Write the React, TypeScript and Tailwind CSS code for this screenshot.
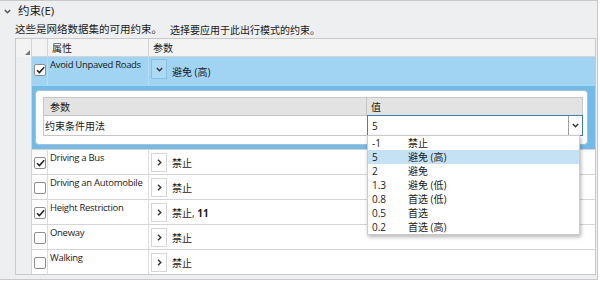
import React from "react";

function Check() {
  return (
    <svg width="9" height="8" viewBox="0 0 9 8">
      <path d="M1 4.3 L3.4 6.6 L8.2 1.2" fill="none" stroke="#1f1f1f" strokeWidth="1.5" />
    </svg>
  );
}

function CheckBox({ checked }: { checked: boolean }) {
  return (
    <div className="w-[12px] h-[12px] rounded-[2px] border border-[#8e8e8e] bg-white flex items-center justify-center">
      {checked && <Check />}
    </div>
  );
}

function ChevRight() {
  return (
    <svg width="5" height="7" viewBox="0 0 5 7">
      <path d="M1 0.8 L3.8 3.5 L1 6.2" fill="none" stroke="#333" strokeWidth="1.4" />
    </svg>
  );
}

function ChevDown({ color = "#333" }: { color?: string }) {
  return (
    <svg width="7" height="5" viewBox="0 0 7 5">
      <path d="M0.8 1 L3.5 3.8 L6.2 1" fill="none" stroke={color} strokeWidth="1.4" />
    </svg>
  );
}

type Row = { checked: boolean; name: string; value: React.ReactNode };

const rows: Row[] = [
  { checked: true, name: "Driving a Bus", value: "禁止" },
  { checked: false, name: "Driving an Automobile", value: "禁止" },
  {
    checked: true,
    name: "Height Restriction",
    value: (
      <>
        禁止, <span className="font-bold">11</span>
      </>
    ),
  },
  { checked: false, name: "Oneway", value: "禁止" },
  { checked: false, name: "Walking", value: "禁止" },
];

const options = [
  ["-1", "禁止"],
  ["5", "避免 (高)"],
  ["2", "避免"],
  ["1.3", "避免 (低)"],
  ["0.8", "首选 (低)"],
  ["0.5", "首选"],
  ["0.2", "首选 (高)"],
];

export default function App() {
  return (
    <div className="relative w-[598px] h-[280px] bg-[#eeeff1] border-t border-r border-b border-[#c9c9c9] font-['Open_Sans','Noto_Sans_CJK_SC',sans-serif] text-[#1a1a1a] overflow-hidden">
      {/* title */}
      <div className="h-[20px] flex items-center pl-[4px]">
        <ChevDown color="#555" />
        <span className="ml-[7px] text-[11.5px] leading-none">约束(E)</span>
      </div>
      {/* description */}
      <div className="h-[17px] flex items-center pl-[15px] leading-none whitespace-nowrap">
        <span className="text-[10.5px]">这些是网络数据集的可用约束。</span>
        <span className="ml-[8px] text-[10px]">选择要应用于此出行模式的约束。</span>
      </div>

      {/* table */}
      <div className="ml-[15px] w-[581px] h-[237px] border border-[#c9c9c9] flex">
        {/* row header column */}
        <div className="w-[16px] border-r border-[#d4d4d4] bg-[#eeeff1] flex flex-col">
          <div className="h-[18px] bg-[#f3f3f3] relative">
            <svg className="absolute right-[1px] bottom-[2px]" width="5" height="5" viewBox="0 0 5 5">
              <path d="M5 0 L5 5 L0 5 Z" fill="#7a7a7a" />
            </svg>
          </div>
        </div>
        {/* data area */}
        <div className="flex-1 flex flex-col">
          {/* header */}
          <div className="h-[18px] flex bg-[#f3f3f3] border-b border-[#d4d4d4] text-[10px] leading-none">
            <div className="w-[16px] border-r border-[#d4d4d4]" />
            <div className="w-[101px] border-r border-[#d4d4d4] flex items-center pl-[4px]">属性</div>
            <div className="flex-1 flex items-center pl-[4px]">参数</div>
          </div>

          {/* selected row */}
          <div className="h-[29px] flex bg-[#a0d4f2] text-[10px]">
            <div className="w-[16px] border-r border-[#b5ddf5] pl-[2px] pt-[7px]">
              <CheckBox checked />
            </div>
            <div className="w-[101px] border-r border-[#b5ddf5] pl-[2px] pt-[1px] text-[9.5px] leading-[13px] whitespace-nowrap tracking-[-0.3px]">
              Avoid Unpaved Roads
            </div>
            <div className="flex-1 flex items-start pl-[2px] pt-[2px]">
              <div className="w-[16px] h-[20px] border border-[#8cc0e0] bg-[#acd9f4] flex items-center justify-center">
                <ChevDown />
              </div>
              <span className="ml-[5px] mt-[8px] leading-none">避免 (高)</span>
            </div>
          </div>

          {/* expanded detail */}
          <div className="h-[63px] bg-[#74bae7] pl-[3px] pr-[6px] pt-[4px]">
            <div className="w-[553px] h-[55px] rounded-[4px] border border-[#a8c2d4] bg-white pl-[7px] pt-[6px]">
              <div className="w-[540px] border border-[#c6c6c6] text-[10px] leading-none">
                <div className="h-[18px] flex bg-[#e3e3e3] border-b border-[#c6c6c6]">
                  <div className="w-[323px] border-r border-[#c6c6c6] flex items-center pl-[6px]">参数</div>
                  <div className="flex-1 flex items-center pl-[4px]">值</div>
                </div>
                <div className="h-[19px] flex bg-white">
                  <div className="w-[323px] flex items-center pl-[1px]">约束条件用法</div>
                  <div className="flex-1 relative">
                    <div className="absolute left-0 top-[-1px] right-[-1px] bottom-[-1px] border border-[#3c7fb1] bg-white flex">
                      <div className="flex-1 flex items-center pl-[4px]">5</div>
                      <div className="w-[14px] border-l border-[#a0a0a0] flex items-center justify-center">
                        <ChevDown />
                      </div>
                    </div>
                  </div>
                </div>
              </div>
            </div>
          </div>

          {/* data rows */}
          {rows.map((r) => (
            <div key={r.name} className="h-[25px] flex bg-white border-t border-[#d4d4d4] text-[10px]">
              <div className="w-[16px] border-r border-[#dcdcdc] pl-[2px] flex items-center pt-[1px]">
                <CheckBox checked={r.checked} />
              </div>
              <div className="w-[101px] border-r border-[#dcdcdc] pl-[2px] pt-[1px] text-[9.5px] leading-[13px] whitespace-nowrap tracking-[-0.3px]">
                {r.name}
              </div>
              <div className="flex-1 flex items-start pl-[2px] pt-[3px]">
                <div className="w-[16px] h-[19px] border border-[#d6d6d6] bg-white flex items-center justify-center">
                  <ChevRight />
                </div>
                <span className="ml-[5px] mt-[5px] leading-none">{r.value}</span>
              </div>
            </div>
          ))}
        </div>
      </div>

      {/* dropdown list */}
      <div className="absolute left-[367px] top-[134px] w-[213px] bg-white border border-[#cccccc] shadow-[1px_2px_4px_rgba(0,0,0,0.3)] text-[10px] leading-none">
        {options.map(([v, l], i) => (
          <div key={v} className={`h-[14px] flex items-center ${i === 1 ? "bg-[#c5e2f4]" : ""}`}>
            <span className="w-[40px] pl-[4px]">{v}</span>
            <span>{l}</span>
          </div>
        ))}
      </div>
    </div>
  );
}
